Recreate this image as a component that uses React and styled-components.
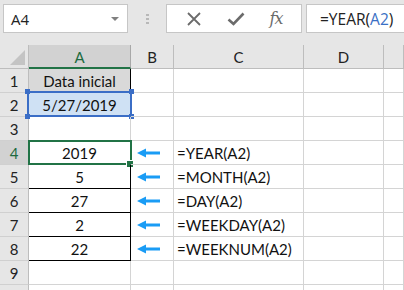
import React from "react";
import styled, { createGlobalStyle, css } from "styled-components";

const Global = createGlobalStyle`
  html, body { margin: 0; padding: 0; background: #fff; }
  body { width: 404px; height: 290px; overflow: hidden; font-family: "Open Sans", "Liberation Sans", sans-serif; }
`;

const Page = styled.div`
  width: 404px;
  height: 290px;
  overflow: hidden;
  background: #fff;
`;

const Toolbar = styled.div`
  height: 45px;
  box-sizing: border-box;
  background: #e6e6e6;
  display: flex;
  align-items: flex-start;
  padding: 4px 0 0 3px;
`;

const Box = styled.div`
  height: 29px;
  box-sizing: border-box;
  background: #fff;
  border: 1px solid #c6c6c6;
  display: flex;
  align-items: center;
`;

const NameBox = styled(Box)`
  width: 125px;
  padding: 0 8px 0 7px;
  justify-content: space-between;
  font-family: "Open Sans", sans-serif;
  font-size: 15px;
  color: #222;
`;

const Caret = styled.span`
  width: 0;
  height: 0;
  border-left: 4px solid transparent;
  border-right: 4px solid transparent;
  border-top: 4px solid #808080;
`;

const Grip = styled.div`
  width: 38px;
  height: 29px;
  display: flex;
  flex-direction: column;
  align-items: center;
  justify-content: center;
  gap: 2px;
  & > span { width: 3px; height: 2px; background: #b8b8b8; }
`;

const ButtonsBox = styled(Box)`
  width: 136px;
  justify-content: space-around;
  padding: 0 6px;
`;

const FxText = styled.span`
  font-family: "DejaVu Serif", "Liberation Serif", serif;
  font-style: italic;
  font-size: 16px;
  color: #6b6b6b;
  letter-spacing: -1px;
`;

const FormulaBox = styled(Box)`
  flex: 1;
  margin-left: 4px;
  border-right: none;
  padding-left: 13px;
  font-family: "Open Sans", sans-serif;
  font-size: 15.5px;
  color: #222;
`;

const Ref = styled.span`
  color: #3a6fc4;
`;

const Grid = styled.div`
  display: grid;
  grid-template-columns: 29px 102px 43px 130px 80px 1fr;
  grid-auto-rows: 24px;
  font-family: "Lato", "Open Sans", sans-serif;
  font-size: 15px;
  color: #111;
`;

const Corner = styled.div`
  background: #e6e6e6;
  border-right: 1px solid #bdbdbd;
  border-bottom: 1px solid #bdbdbd;
  box-sizing: border-box;
  position: relative;
  &::after {
    content: "";
    position: absolute;
    right: 3px;
    bottom: 3px;
    width: 0;
    height: 0;
    border-left: 15px solid transparent;
    border-bottom: 15px solid #c4c4c4;
  }
`;

const ColHead = styled.div`
  box-sizing: border-box;
  background: ${p => (p.$sel ? "#d2d2d2" : "#e6e6e6")};
  border-right: 1px solid ${p => (p.$sel ? "#a8a8a8" : "#bdbdbd")};
  border-bottom: ${p => (p.$sel ? "2px solid #217346" : "1px solid #bdbdbd")};
  color: ${p => (p.$sel ? "#1d6b40" : "#222")};
  display: flex;
  align-items: center;
  justify-content: center;
  padding-top: ${p => (p.$sel ? "1px" : "0")};
`;

const RowHead = styled.div`
  box-sizing: border-box;
  background: ${p => (p.$sel ? "#d2d2d2" : "#e6e6e6")};
  border-right: 1px solid #bdbdbd;
  border-bottom: 1px solid #d0d0d0;
  color: ${p => (p.$sel ? "#1d6b40" : "#222")};
  display: flex;
  align-items: center;
  justify-content: center;
`;

const Cell = styled.div`
  box-sizing: border-box;
  position: relative;
  border-right: 1px solid #d4d4d4;
  border-bottom: 1px solid #d4d4d4;
  display: flex;
  align-items: center;
  justify-content: ${p => (p.$center ? "center" : "flex-start")};
  padding-left: ${p => (p.$center ? "0" : "3px")};
  white-space: nowrap;
  ${p =>
    p.$table &&
    css`
      border-right-color: #000;
      border-bottom-color: #000;
    `}
  ${p =>
    p.$head &&
    css`
      background: #d9d9d9;
    `}
  ${p =>
    p.$range &&
    css`
      background: #cfe1f4;
      &::before {
        content: "";
        position: absolute;
        inset: -2px -2px -1px -2px;
        border: 2px solid #3b6ec6;
        pointer-events: none;
      }
    `}
  ${p =>
    p.$active &&
    css`
      &::before {
        content: "";
        position: absolute;
        inset: -1px -2px -1px -1px;
        border: 2px solid #217346;
        pointer-events: none;
      }
      &::after {
        content: "";
        position: absolute;
        right: -4px;
        bottom: -4px;
        width: 6px;
        height: 6px;
        background: #217346;
        border: 1px solid #fff;
      }
    `}
`;

const Handle = styled.span`
  position: absolute;
  width: 5px;
  height: 5px;
  background: #3b6ec6;
  ${p => (p.$top ? "top: -4px;" : "bottom: -3px;")}
  ${p => (p.$left ? "left: -4px;" : "right: -4px;")}
`;

const ArrowCell = styled(Cell)`
  padding-left: 6px;
`;

const Arrow = () => (
  <svg width="24" height="10" viewBox="0 0 24 10">
    <polygon points="0,5 9,0.5 9,9.5" fill="#1a9cf5" />
    <rect x="8" y="3.5" width="15" height="3" fill="#1a9cf5" />
  </svg>
);

const XIcon = () => (
  <svg width="16" height="16" viewBox="0 0 16 16">
    <path d="M2 2 L14 14 M14 2 L2 14" stroke="#6b6b6b" strokeWidth="1.8" fill="none" />
  </svg>
);

const CheckIcon = () => (
  <svg width="18" height="16" viewBox="0 0 18 16">
    <path d="M1.5 8.5 L6.5 13 L16.5 2.5" stroke="#6b6b6b" strokeWidth="2.6" fill="none" />
  </svg>
);

const cols = ["A", "B", "C", "D", ""];
const rows = [
  { a: "Data inicial", head: true, table: true },
  { a: "5/27/2019", range: true },
  { a: "" },
  { a: "2019", f: "=YEAR(A2)", table: true, active: true },
  { a: "5", f: "=MONTH(A2)", table: true },
  { a: "27", f: "=DAY(A2)", table: true },
  { a: "2", f: "=WEEKDAY(A2)", table: true },
  { a: "22", f: "=WEEKNUM(A2)", table: true },
  { a: "" },
  { a: "", hideNum: true },
];

export default function App() {
  return (
    <Page>
      <Global />
      <Toolbar>
        <NameBox>
          <span>A4</span>
          <Caret />
        </NameBox>
        <Grip>
          <span />
          <span />
          <span />
        </Grip>
        <ButtonsBox>
          <XIcon />
          <CheckIcon />
          <FxText>fx</FxText>
        </ButtonsBox>
        <FormulaBox>
          =YEAR(<Ref>A2</Ref>)
        </FormulaBox>
      </Toolbar>
      <Grid>
        <Corner />
        {cols.map((c, i) => (
          <ColHead key={i} $sel={c === "A"}>
            {c}
          </ColHead>
        ))}
        {rows.map((r, i) => (
          <React.Fragment key={i}>
            <RowHead $sel={i === 3}>{r.hideNum ? "" : i + 1}</RowHead>
            <Cell
              $center
              $table={r.table}
              $head={r.head}
              $range={r.range}
              $active={r.active}
            >
              {r.a}
              {r.range && (
                <>
                  <Handle $top $left />
                  <Handle $top />
                  <Handle $left />
                  <Handle />
                </>
              )}
            </Cell>
            {r.f ? (
              <ArrowCell>
                <Arrow />
              </ArrowCell>
            ) : (
              <Cell />
            )}
            <Cell>{r.f || ""}</Cell>
            <Cell />
            <Cell />
          </React.Fragment>
        ))}
      </Grid>
    </Page>
  );
}
